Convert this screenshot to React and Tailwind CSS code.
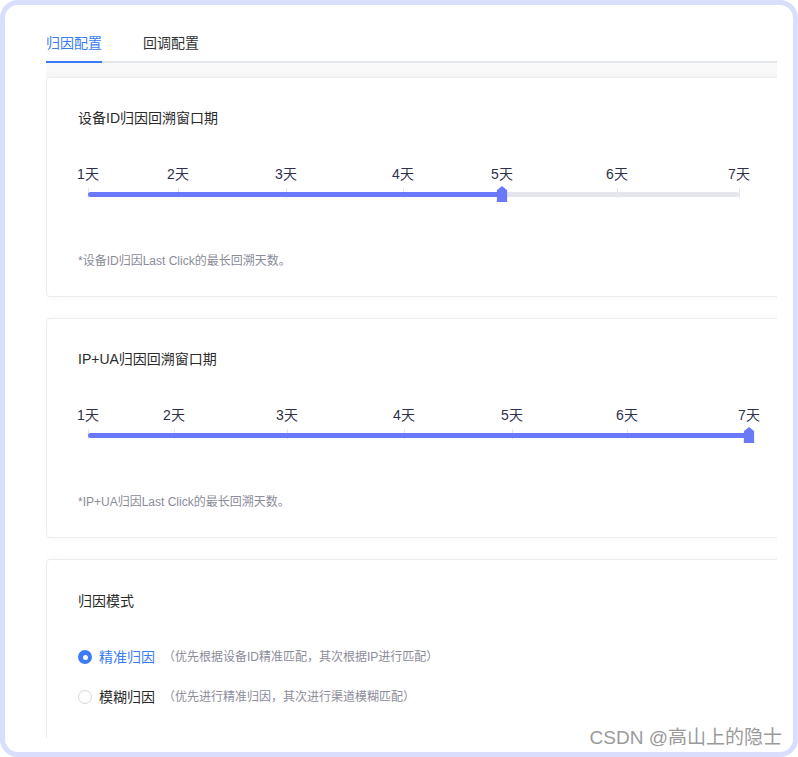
import React from "react";

const windows = [
  {
    title: "设备ID归因回溯窗口期",
    hint: "*设备ID归因Last Click的最长回溯天数。",
    marks: [0, 90, 198, 315, 414, 529, 651],
    width: 651,
    value: 4,
  },
  {
    title: "IP+UA归因回溯窗口期",
    hint: "*IP+UA归因Last Click的最长回溯天数。",
    marks: [0, 86, 199, 316, 424, 539, 661],
    width: 661,
    value: 6,
  },
];

const modes = [
  { label: "精准归因", desc: "（优先根据设备ID精准匹配，其次根据IP进行匹配）", checked: true },
  { label: "模糊归因", desc: "（优先进行精准归因，其次进行渠道模糊匹配）", checked: false },
];

function DaySlider({ marks, width, value }) {
  const fill = marks[value];
  return (
    <div className="relative ml-[10px] h-[40px]" style={{ width }}>
      {marks.map((left, i) => (
        <div
          key={"t" + i}
          className="absolute top-[24px] h-[10px] w-px bg-[#e3e5eb]"
          style={{ left }}
        />
      ))}
      <div className="absolute left-0 top-[28px] h-[5px] w-full rounded-full bg-[#e4e6ec]" />
      <div
        className="absolute left-0 top-[28px] h-[5px] rounded-l-full bg-[#6a78fa]"
        style={{ width: fill }}
      />
      {marks.map((left, i) => (
        <div
          key={"l" + i}
          className="absolute top-0 -translate-x-1/2 whitespace-nowrap text-[14px] leading-[20px] text-[#2f3049]"
          style={{ left }}
        >
          {i + 1}天
        </div>
      ))}
      <div
        className="absolute top-[22px] h-[16px] w-[11px] -translate-x-1/2 bg-[#6a78fa] [clip-path:polygon(50%_0,100%_28%,100%_100%,0_100%,0_28%)]"
        style={{ left: fill }}
      />
    </div>
  );
}

function WindowCard({ item }) {
  return (
    <div className="h-[220px] w-[760px] shrink-0 rounded-[4px] border border-[#ebebf2] bg-white pl-[31px] pt-[30px] shadow-[0_0_12px_rgba(0,0,0,0.04)]">
      <p className="text-[14px] leading-[20px] text-[#2a2a2a]">{item.title}</p>
      <div className="mt-[36px]">
        <DaySlider marks={item.marks} width={item.width} value={item.value} />
      </div>
      <p className="mt-[49px] text-[12px] leading-[16px] text-[#8b8b99]">{item.hint}</p>
    </div>
  );
}

export default function App() {
  return (
    <div className="relative h-[757px] w-[798px] overflow-hidden rounded-[18px] border-[5px] border-[#d8defc] bg-white font-['Liberation_Sans','Noto_Sans_CJK_SC',sans-serif]">
      <div className="pl-[41px] pr-[16px]">
        {/* tabs */}
        <div className="flex gap-[41px] border-b-2 border-[#e3e6eb] pt-[28px]">
          <div className="-mb-[2px] border-b-2 border-[#3a7cf6] pb-[8px] text-[14px] leading-[20px] text-[#3a7cf6]">
            归因配置
          </div>
          <div className="pb-[8px] text-[14px] leading-[20px] text-[#333]">回调配置</div>
        </div>

        <div className="h-[675px] overflow-hidden">
          <div className="h-[14px] bg-[#f9f9fa]" />
          <div className="flex flex-col gap-[21px]">
            {windows.map((w) => (
              <WindowCard key={w.title} item={w} />
            ))}

            <div className="h-[220px] w-[760px] shrink-0 rounded-[4px] border border-[#ebebf2] bg-white pl-[31px] pt-[31px] shadow-[0_0_12px_rgba(0,0,0,0.04)]">
              <p className="text-[14px] leading-[20px] text-[#2a2a2a]">归因模式</p>
              <div className="mt-[36px] flex flex-col gap-[20px]">
                {modes.map((m) => (
                  <div key={m.label} className="flex items-center">
                    {m.checked ? (
                      <span className="flex h-[14px] w-[14px] items-center justify-center rounded-full bg-[#3a7cf6]">
                        <span className="h-[5px] w-[5px] rounded-full bg-white" />
                      </span>
                    ) : (
                      <span className="h-[14px] w-[14px] rounded-full border border-[#d7d8e0] bg-white" />
                    )}
                    <span
                      className={
                        m.checked
                          ? "ml-[7px] text-[14px] leading-[20px] text-[#3a7cf6]"
                          : "ml-[7px] text-[14px] leading-[20px] text-[#2a2a2a]"
                      }
                    >
                      {m.label}
                    </span>
                    <span className="ml-[8px] text-[12px] leading-[20px] text-[#8c8c9a]">{m.desc}</span>
                  </div>
                ))}
              </div>
            </div>
          </div>
        </div>
      </div>

      <div className="absolute bottom-[2px] right-[11px] text-[19px] leading-[24px] text-[#9a9a9a] [text-shadow:0_0_2px_#fff]">
        CSDN @高山上的隐士
      </div>
    </div>
  );
}
